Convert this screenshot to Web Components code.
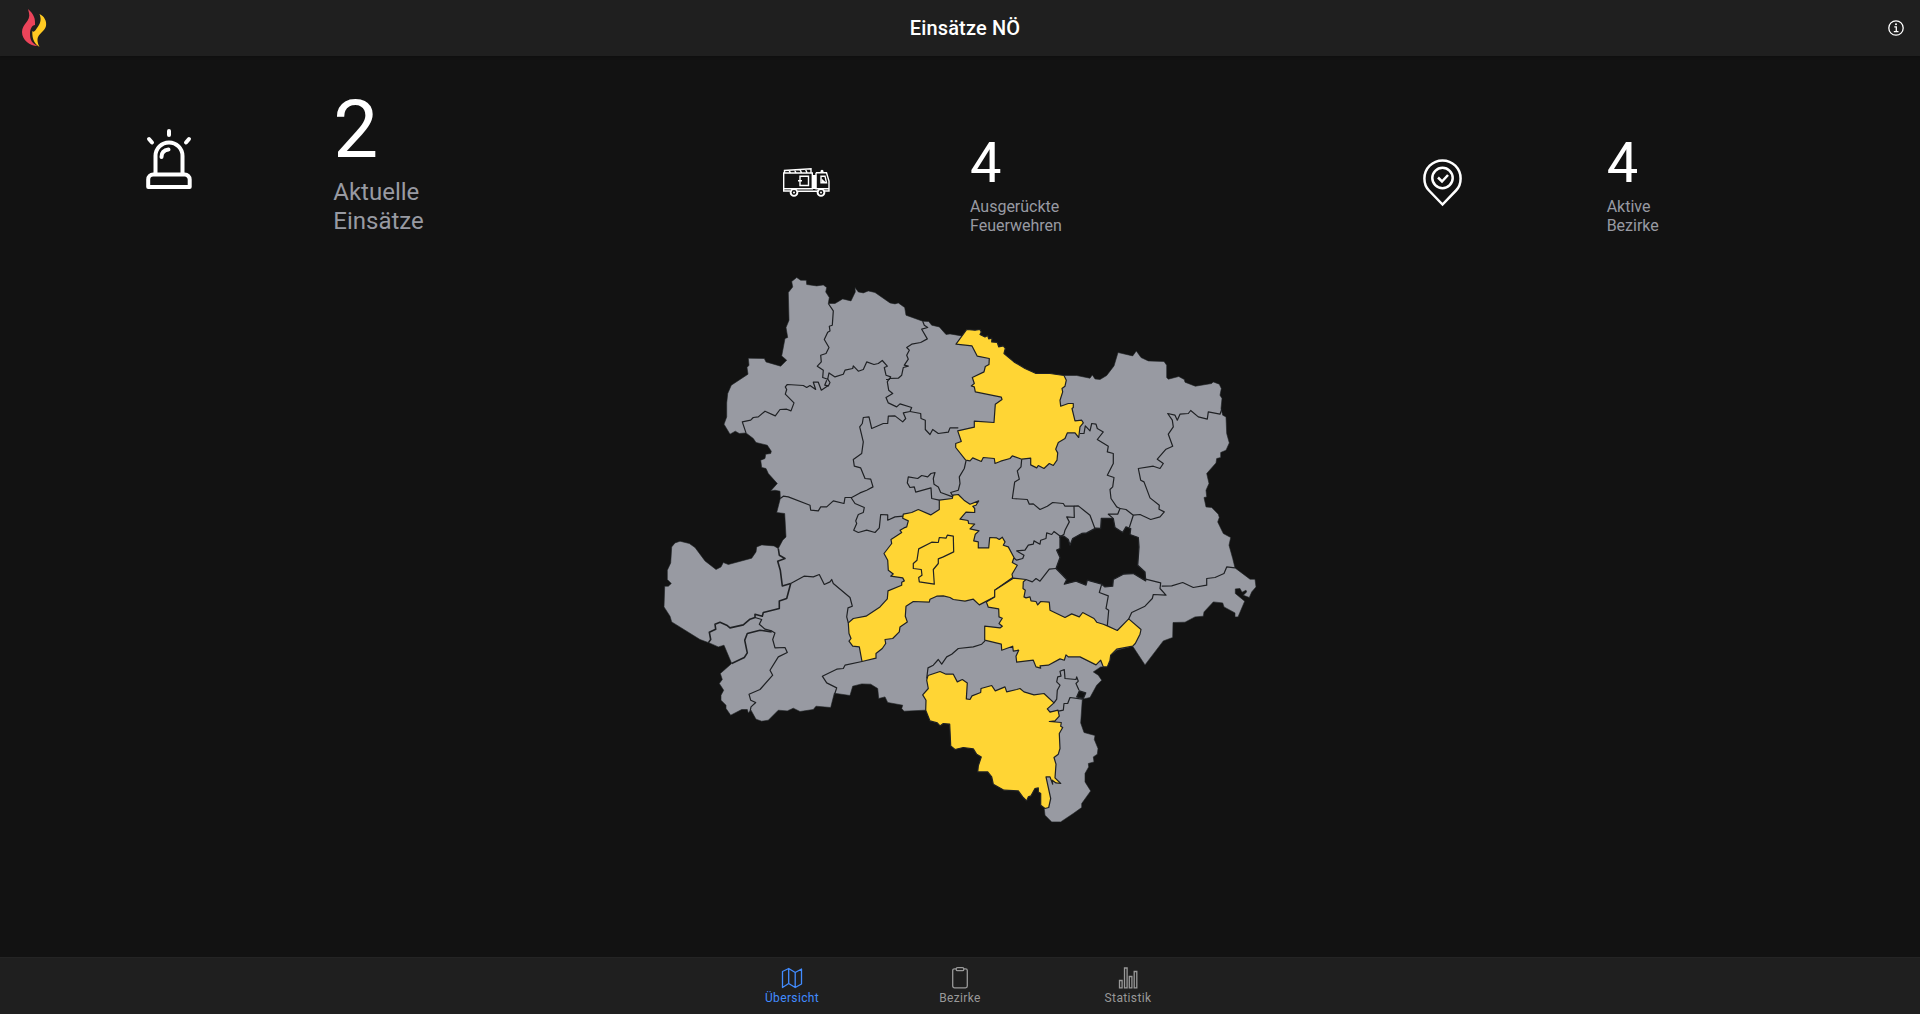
<!DOCTYPE html>
<html lang="de">
<head>
<meta charset="utf-8">
<title>Einsätze NÖ</title>
<style>
html,body{margin:0;height:100%;background:#121212;overflow:hidden}
body{font-family:Roboto,sans-serif;color:#fff}
</style>
</head>
<body>
<no-app>
  <no-header slot="header">Einsätze NÖ</no-header>
  <no-stat slot="stats" size="large" value="2"><no-icon slot="icon" name="siren"></no-icon>Aktuelle<br>Einsätze</no-stat>
  <no-stat slot="stats" value="4"><no-icon slot="icon" name="truck"></no-icon>Ausgerückte<br>Feuerwehren</no-stat>
  <no-stat slot="stats" value="4"><no-icon slot="icon" name="pin"></no-icon>Aktive<br>Bezirke</no-stat>
  <no-map slot="map"></no-map>
  <no-tab slot="tabs" selected><no-icon slot="icon" name="map"></no-icon>Übersicht</no-tab>
  <no-tab slot="tabs"><no-icon slot="icon" name="clipboard"></no-icon>Bezirke</no-tab>
  <no-tab slot="tabs"><no-icon slot="icon" name="stats"></no-icon>Statistik</no-tab>
</no-app>
<script>
const define = (name, html) => customElements.define(name, class extends HTMLElement {
  constructor() { super(); this.attachShadow({ mode: 'open' }); }
  connectedCallback() {
    this.shadowRoot.innerHTML = typeof html === 'function' ? html(this) : html;
  }
});

const icons = {
  flame: [24, 38, `<path fill="#eb445a" d="M6 0C12 5 13.500 10 13 16C10 16 8 20 8 25C8 31 10 34 15.500 37C8 37 0 31 0 23C0 15 9 12 7 4Z"/><path fill="#ffca22" d="M17.500 5C22 7 25 12 24 17C23 22 16 25 15.500 30C15.300 33 16 35 17.500 38C13 35 10 31 10.300 22C12 24 13.500 21 15 19C18 15 20 11 17.500 5Z"/>`],
  info: [16, 16, `<circle cx="8" cy="8" r="7.200" fill="none" stroke="#fff" stroke-width="1.300"/><path d="M6.300 6.900h2v4.500M5.800 11.600h4.700" fill="none" stroke="#fff" stroke-width="1.300"/><circle cx="8" cy="4.300" r="1" fill="#fff"/>`],
  siren: [46, 60, `<g fill="none" stroke="#fff" stroke-width="4" stroke-linecap="round" stroke-linejoin="round"><path d="M23 2v4M3 10l3 3.500M43 10l-3 3.500M9.500 45V27a13.500 13.500 0 0 1 27 0v18M2.200 58V50.500a5 5 0 0 1 5-5h31.500a5 5 0 0 1 5 5V58ZM15.500 28c0-4.500 3-7 7-7.500"/></g>`],
  truck: [46, 29, `<g fill="none" stroke="#fff" stroke-width="1.400"><path d="M.7 5h28.600v15.800H.7ZM33 4.800h10.500L46 13v10h-5M33 4.800v16h13M.7 21v2H7M15 23.200h20M1.500 4.500V2.500L28 .7V5M6 2.300l1.500 2.500M11.500 2l1.500 2.800M17 1.600l1.500 3.200M22.500 1.300L24 4.800M17 8.300h8.500v9.200H17ZM15 12.800h4M38 8.200h4l1.500 6.500H38Z"/><circle cx="11" cy="24.500" r="3.400" stroke-width="1.900"/><circle cx="38" cy="24.500" r="3.400" stroke-width="1.900"/></g><path fill="#fff" d="M29 7h4.300v14H29ZM37.500 4.800V3.200a1.500 1.500 0 0 1 3 0v1.600ZM38.500 10.500l4.500 4h-4.500Z"/><circle cx="11" cy="24.500" r="1" fill="#fff"/><circle cx="38" cy="24.500" r="1" fill="#fff"/>`],
  pin: [39, 47, `<g fill="none" stroke="#fff" stroke-width="2.500" transform="translate(0 -.5)"><path d="M19.500 46 6 32C3 29 1.400 25 1.400 20a18.100 18.100 0 0 1 36.200 0c0 5-1.600 9-4.600 12Z"/><circle cx="19.500" cy="19.500" r="10.200"/><path d="m15 19 4 4 6-6.500"/></g>`],
  map: [22, 22, `<path fill="none" stroke="currentColor" stroke-width="1.300" stroke-linejoin="round" d="M1.500 4.500 7.700 1.500l6.500 4L20.500 2v15l-6.300 3.500-6.500-4-6.200 4ZM7.700 1.500v15M14.200 5.500v15"/>`],
  clipboard: [22, 22, `<g fill="none" stroke="currentColor" stroke-width="1.300"><rect x="3.700" y="1.800" width="14.600" height="19" rx="1.800"/><rect x="7.200" y=".7" width="7.600" height="3" rx="1.300" fill="#1f1f1f"/></g>`],
  stats: [22, 22, `<path fill="none" stroke="currentColor" stroke-width="1.300" d="M2.500 13.500h2.600v7.300H2.500ZM7.500 1h2.600v19.800H7.500ZM12.300 9.500h2.600v11.300h-2.600ZM17.200 4.500h2.600v16.300h-2.600Z"/>`]
};
define('no-icon', el => {
  const [w, h, art] = icons[el.getAttribute('name')];
  return `<style>:host{display:block;flex:none;line-height:0}svg{display:block;overflow:visible}</style><svg width="${w}" height="${h}" viewBox="0 0 ${w} ${h}">${art}</svg>`;
});

define('no-header', `<style>
:host{display:flex;align-items:center;justify-content:space-between;box-sizing:border-box;height:56px;padding:0 16px 0 22px;background:#1f1f1f;box-shadow:0 1px 3px rgba(0,0,0,.25)}
.side{flex:1;display:flex}.end{justify-content:flex-end;padding-bottom:1px}
h1{margin:0;padding-left:4px;font:500 20px/24px Roboto,sans-serif;letter-spacing:.15px;color:#fff}
</style><div class="side"><no-icon name="flame"></no-icon></div><h1><slot></slot></h1><div class="side end"><no-icon name="info"></no-icon></div>`);

define('no-stat', el => `<style>
:host{display:flex;align-items:center;flex:1;line-height:1.2;font-size:16px}
:host([size=large]){font-size:24px;margin-bottom:-.6px}
.icon{width:328.300px;display:flex;justify-content:center}
.value{font-size:56px;line-height:66.400px;color:#fff}
:host([size=large]) .value{font-size:80px;line-height:96px}
.label{color:#989aa2}
</style><div class="icon"><slot name="icon"></slot></div><div><div class="value">${el.getAttribute('value')}</div><div class="label"><slot></slot></div></div>`);

define('no-tab', `<style>
:host{display:flex;flex-direction:column;align-items:center;width:168px;padding-top:9px;box-sizing:border-box;color:#999;font-size:12px;line-height:14px;letter-spacing:.36px}
:host([selected]){color:#428cff}
.text{margin-top:2px}
</style><slot name="icon"></slot><div class="text"><slot></slot></div>`);

/* District geometry: each chain is drawn on one of five map sheets at triple scale. */
const sheets = { A: [650, 260], B: [940, 300], C: [650, 480], D: [950, 500], E: [800, 600] };
const trace = (src, close) => {
  let sheet = sheets.A, out = [];
  for (const t of src.trim().split(/\s+/)) {
    if (sheets[t]) { sheet = sheets[t]; continue; }
    const [x, y] = t.split(',').map(Number);
    out.push((sheet[0] + x / 3).toFixed(1) + ' ' + (sheet[1] + y / 3).toFixed(1));
  }
  return 'M' + out.join('L') + (close ? 'Z' : '');
};
const land = `A 222,492 230,470 230,428 233,400 244,375 294,342 291,322 297,315 295,294 343,295 348,305 392,318 410,300 395,287 405,235 413,232 408,202 417,180 415,97 428,80 425,64 440,52 452,60 469,60 470,73 500,77 520,74 530,82 527,95 538,112 535,130 555,130 578,116 603,122 616,95 615,82 625,95 640,98 655,92 675,97 720,128 735,131 745,128 764,142 768,165 818,183 836,184 845,195 868,200 888,223 900,221 935,227
B 70,130 110,120 190,165 222,188 288,223 372,226 410,226 450,234 457,224 465,236 480,238 500,226 522,197 534,157 578,167 589,152 603,172 625,182 672,184 680,195 680,232 685,237 716,229 733,238 735,246 766,258 815,250 820,245 838,252 844,265 840,285 846,295 843,325 848,345 858,350 860,400 868,428 858,450 842,457 842,472 830,475 828,488 800,520 807,550 798,570 800,590 792,592 798,620 815,622 835,642 838,652 833,665 850,700 872,712 867,735
D 848,175 855,203 900,237 915,237 918,260 905,275 898,292 880,285 890,275 888,270 876,276 870,265 856,266 856,280 884,303 864,350 855,350 855,338 822,320 818,308 790,305 762,335 760,348 735,350 705,366 669,367 668,412 640,422 585,494 548,438 500,450 482,465 465,500 452,500 430,515 445,525 455,540 440,555 420,592 397,597 392,668 402,697 435,706 433,718 444,745
E 892,462 880,470 882,485 865,490 866,500 855,520 855,545 872,572 845,610 845,622 820,640 782,665 755,665 735,645 733,627 745,600 735,540 700,530 600,530 600,420 470,400 470,340 375,330 312,333 305,325 308,315 263,307 255,290 236,295 233,265 212,252 185,251 158,258 150,286 103,279 92,322 48,318 40,328 0,334
C 430,684 412,692 385,690 355,720 335,723 318,717 303,690 295,698 292,688 275,688 242,705 228,685 228,675 213,660 213,645 221,630 208,610 217,598 211,580 245,550 222,495 205,500 178,488 150,478 65,425 60,408 42,380 44,318 55,318 64,310 52,298 52,270 62,248 65,200 75,188 90,183 118,190 135,202 165,242 198,268 213,260 220,247 235,253 305,234 318,215 320,200 335,194 372,197 385,205 398,180 408,170 404,100 380,97
A 391,715 390,693 375,690 362,692 382,670 355,640 348,625 335,622 332,600 345,595 347,582 362,580 364,573 352,555 318,547 310,535 288,518 268,520 256,513 240,522`;
const holes = [
  `D 360,135 368,115 395,100 410,98 437,84 452,85 454,55 490,55 495,82 518,97 528,80 542,85 540,103 565,112 567,140 563,195 585,215 587,242 550,220 520,222 490,238 488,258 465,260 455,252 412,240 408,255 378,243 343,252 350,238 338,225 318,205 330,172 320,150 330,145 330,107 342,108 355,118`,
  `E 838,272 857,278 850,295 830,290`
];
const active = [
  `B 48,132 80,88 105,90 120,88 124,95 120,103 135,110 143,106 146,116 156,114 155,125 172,127 176,140 190,137 196,145 192,160 222,185 255,205 288,220 330,220 372,226 379,240 375,258 366,265 368,275 360,300 362,318 385,310 400,310 400,322 396,325 405,362 425,360 430,368 420,380 416,412 405,398 382,398 375,415 355,427 347,447 353,458 351,480 340,496 328,490 312,505 295,496 290,503 272,494 272,474 245,477 217,467 210,475 182,483 165,490 163,475 130,472 124,484 98,473 90,482 77,480 47,442 47,430 64,424 53,392 103,381 103,363 162,367 166,312 186,298 184,291 106,275 103,260 94,257 103,250 97,232 132,215 136,199 147,193 148,175 112,168 96,137`,
  `C 868,60 907,55 B 39,585 55,583 72,600 90,612 116,602 108,615 98,618 104,625 104,637 78,636 60,657 84,661 86,670 104,672 90,686 117,692 106,702 101,722 115,725 115,743 146,743 149,712 170,713 178,718 187,711 195,725 190,735 205,740 222,772 D 190,178 187,187 202,195 186,222 188,232 134,270 134,290 88,314 70,297 45,303 10,298 C 900,352 880,347 860,348 840,357 838,366 790,364 768,378 766,408 772,425 750,440 748,455 728,475 705,478 707,490 697,505 678,520 678,534 636,544 628,500 608,498 597,483 603,475 597,460 595,428 610,415 648,408 690,380 712,356 714,332 755,315 755,306 763,302 758,293 722,288 730,281 715,270 713,240 702,220 725,190 723,178 755,157 750,150 762,143 770,140 775,122 758,114 760,102 785,97 805,88 842,104 868,88`,
  `D 190,234 228,238 220,245 219,265 226,270 222,290 228,293 240,290 243,302 258,304 263,314 272,304 298,306 300,330 345,352 365,341 388,350 398,337 432,355 440,366 460,372 472,377 502,391 536,356 573,388 570,402 556,430 548,438 500,447 482,465 480,480 472,500 460,500 452,480 438,494 390,470 355,470 348,464 343,480 330,476 295,495 270,497 272,504 258,500 250,480 200,486 198,468 206,450 190,453 188,438 155,450 154,432 104,420 104,378 150,383 157,378 147,370 157,354 147,350 146,326 115,321 109,305 134,290 134,270`,
  `E 380,240 384,226 420,214 438,222 460,222 472,245 487,238 502,248 499,296 510,298 516,287 542,277 543,265 575,256 586,272 615,260 620,275 650,268 660,265 672,275 702,284 732,280 762,308 742,326 750,336 774,330 778,348 765,362 748,364 784,367 782,378 788,382 778,400 780,445 775,462 762,472 768,492 765,533 782,550 768,548 757,540 758,552 750,530 738,530 752,595 746,622 735,625 722,615 722,580 715,575 715,563 705,565 693,587 685,590 680,602 668,590 655,572 612,570 580,552 575,530 563,515 533,515 535,497 544,470 530,462 520,446 490,442 465,448 452,437 449,372 430,370 420,377 412,368 390,362 377,330 378,300 368,284 385,265`
];
const borders = [
  `A 535,130 550,152 547,195 538,198 540,212 533,216 523,238 537,262 528,280 512,285 514,305 502,318 520,330 518,352 533,357 537,338 555,350 580,342 585,330 608,325 610,317 625,333 640,328 650,305 672,313 685,310 697,301 712,318 703,322 708,345 722,350 718,358 708,358`,
  `A 533,357 540,367 535,377 524,375 530,360`,
  `A 535,376 514,390 505,366 490,366 497,388 480,376 470,382 460,376 412,373 406,380 410,388 406,402 432,428 423,452 410,447 390,448 376,467 345,453 325,470 310,472 302,480 277,485 288,518`,
  `A 818,183 823,195 833,202 815,207 832,236 812,247 785,252 770,262 778,270 770,285 775,297 763,315 775,318 760,322 755,345 745,354 718,355 712,365 716,390 728,400 708,412 715,428 740,440 750,431 785,442 780,454 760,458 767,475 758,485 735,467 715,468 713,490 700,490 665,505 657,470 640,472 637,490 629,500 640,545 635,580 610,598 613,618 632,623 645,655 662,657 669,680 650,690 630,698 605,712 585,712 582,730 550,722 530,740 512,740 505,752 482,750 480,735 415,710 400,708 391,715`,
  `A 780,454 812,460 813,475 826,480 826,508 840,523 848,508 865,520 895,516 900,503 925,503`,
  `A 948,602 943,625 928,650 930,670 925,690 902,697 910,710`,
  `A 868,720 845,715 843,683 797,696 793,680 780,682 772,668 775,650 803,655 815,646 833,650 843,640 855,637 850,655 852,672 865,680 872,697 908,710`,
  `C 603,52 615,70 643,82 640,97 625,103 617,122 620,130 611,150 625,157 650,150 675,157 688,143 692,103 713,104 713,120 735,110 760,108`,
  `B 420,400 432,400 436,377 450,392 455,370 468,372 472,385 490,395 472,418 505,438 502,455 520,460 520,490 502,525 522,532 518,560 510,568 513,595 530,620 540,625 533,642 505,642 518,653`,
  `B 540,625 558,628 580,645 568,682`,
  `B 580,645 600,643 632,658 660,650 673,635 657,627 658,615 630,593 612,545 602,540 595,505 640,498 660,505 670,490 652,477 678,447 698,438 685,402 700,380 697,360 683,340 705,345 712,360 720,342 745,340 752,331 775,350 802,357 805,335 840,342 846,325`,
  `B 245,477 243,500 232,512 238,537 224,545 217,595 262,598 268,612 280,611 300,628 322,618 338,607 370,610 375,618 402,618 403,652 380,650 388,665 375,690 372,702 358,712`,
  `B 402,618 415,617 450,645 466,688`,
  `D 330,107 312,94 305,103 290,98 288,115 272,120 270,132 252,122 250,132 235,135 225,150 200,152 222,165 218,175 200,180 190,172`,
  `C 422,310 462,288 490,290 508,283 523,313 540,305 545,298 550,310 600,352 607,378 594,383 590,410 595,428`,
  `C 315,412 335,418 328,432 345,447 365,452 375,458 368,478 375,503 405,502 412,517 385,530 360,570 368,585 330,628 297,642 302,660 317,667 303,680 300,695`,
  `C 636,544 585,555 580,565 560,567 517,588 530,608 560,623 553,645`,
  `E 380,235 384,203 400,195 415,178 425,192 440,170 455,162 475,145 520,140 545,132 555,122`,
  `D 228,238 247,245 258,235 270,243 298,207 318,205`,
  `D 455,252 448,277 475,287 468,325 476,330 472,377`,
  `D 587,237 632,248 630,265 648,285 610,283 607,295 585,318 545,337 536,356`,
  `D 635,258 665,257 698,247 730,262 770,255 770,235 795,232 822,220 830,200 855,203`,
  `E 762,308 770,297 772,270 780,255 770,245 773,230 783,228 780,213 793,208 795,235 828,238 830,230 835,243 828,250 837,270`,
  `E 847,297 810,292 803,310 792,310 790,330 765,335 750,336`
];
const city = `C 806,206 845,186 865,187 868,172 888,174 892,165 910,168 911,215 880,230 865,236 865,250 850,268 853,312 808,305 806,292 816,285 814,268 790,265 790,250 801,240`;
const heavy = [
  `C 385,205 388,225 405,235 383,243 391,270 397,317 422,310`,
  `C 422,310 410,355 388,362 388,385 340,397 337,408 315,402 315,412 300,417 280,434 240,443 230,435 210,426 195,432 197,447 178,456 182,478 175,488`,
  `C 365,455 330,450 292,460 284,480 292,518 283,532 245,550`
];
const paths = (list, cls, close) => list.map(p => `<path class="${cls}" d="${trace(p, close)}"/>`).join('');
define('no-map', `<style>
:host{display:block}svg{display:block}
path{stroke:#1f2124;stroke-width:1.200;stroke-linejoin:round;fill:none}
.land{fill:#989aa2;stroke-width:.6}.hole{fill:#121212;stroke-width:1.300}.active{fill:#ffd534}.heavy{stroke-width:1.600}
</style><svg width="620" height="580" viewBox="650 259.800 620 580">${paths([land], 'land', true)}${paths(holes, 'hole', true)}${paths(borders, '', false)}${paths(heavy, 'heavy', false)}${paths(active, 'active', true)}${paths([city], '', true)}</svg>`);

define('no-app', `<style>
:host{display:flex;flex-direction:column;height:100vh;background:#121212}
.content{flex:1;min-height:0}
.stats{display:flex;align-items:flex-end;height:179.200px;padding:0 5px}
.map{display:flex;justify-content:center;padding-top:24.800px}
.tabs{display:flex;justify-content:center;box-sizing:border-box;height:57px;background:#1f1f1f;border-top:1px solid #242424}
</style><slot name="header"></slot><div class="content"><div class="stats"><slot name="stats"></slot></div><div class="map"><slot name="map"></slot></div></div><div class="tabs"><slot name="tabs"></slot></div>`);
</script>
</body>
</html>
